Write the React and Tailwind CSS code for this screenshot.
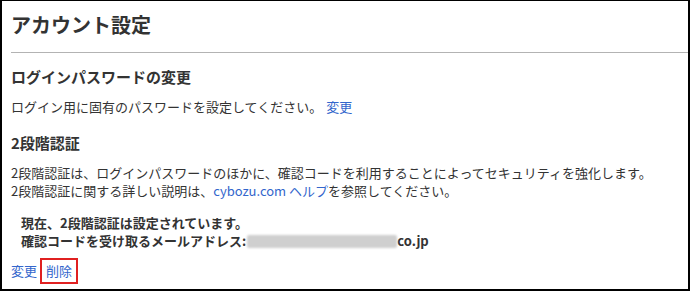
export default function App() {
  return (
    <div className="w-[691px] h-[292px] bg-white" style={{ fontFamily: '"Noto Sans CJK JP", "Noto Sans", sans-serif' }}>
      <div className="w-[690px] h-[291px] border-l-2 border-r-2 border-t border-b-2 border-black text-[#333333] overflow-hidden">
        {/* header */}
        <div className="pl-[9px] pt-[9px] pb-[12px] text-[20px] leading-[30px] font-bold">アカウント設定</div>
        <div className="ml-[9px] h-[1px] bg-[#b3b3b3]"></div>

        <div className="px-[9px]">
          <h2 className="mt-[13px] text-[15px] leading-[22px] font-bold">ログインパスワードの変更</h2>
          <p className="mt-[10px] text-[13px] leading-[18px]">
            ログイン用に固有のパスワードを設定してください。
            <a className="ml-[4px] text-[#3366cc]">変更</a>
          </p>

          <h2 className="mt-[16px] text-[15px] leading-[22px] font-bold">2段階認証</h2>
          <div className="mt-[10px] text-[13px] leading-[18px]">
            <p>2段階認証は、ログインパスワードのほかに、確認コードを利用することによってセキュリティを強化します。</p>
            <p>
              2段階認証に関する詳しい説明は、<a className="text-[#3366cc]">cybozu.com ヘルプ</a>を参照してください。
            </p>
          </div>

          <div className="mt-[14px] pl-[10px] text-[13px] leading-[18px] font-bold">
            <p>現在、2段階認証は設定されています。</p>
            <p className="flex items-center">
              <span>確認コードを受け取るメールアドレス:</span>
              <span className="inline-block w-[150px] h-[13px] ml-[1px] bg-[#cfcfcf] blur-[1px] rounded-[2px]"></span>
              <span>co.jp</span>
            </p>
          </div>

          <div className="mt-[8px] flex items-center text-[13px] leading-[18px] text-[#3366cc]">
            <a>変更</a>
            <span className="ml-[3px] border-2 border-[#e02020] px-[4px] py-[2px]">削除</span>
          </div>
        </div>
      </div>
    </div>
  );
}
